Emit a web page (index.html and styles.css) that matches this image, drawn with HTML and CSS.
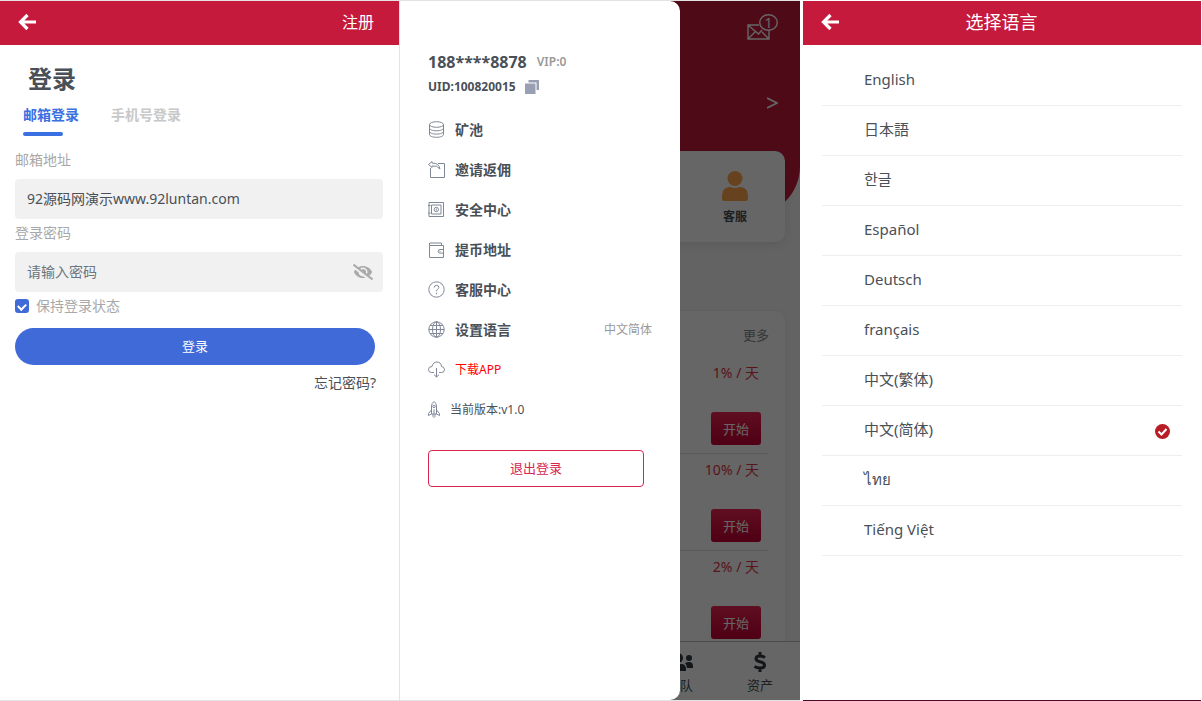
FILE: index.html
```html
<!DOCTYPE html>
<html lang="zh-CN">
  <head>
    <meta charset="utf-8" />
    <meta name="viewport" content="width=device-width, initial-scale=1" />
    <title>登录</title>
    <link rel="stylesheet" href="styles.css">
  </head>

  <body>
    <main class="screens">
      <section class="screen login">
        <header class="topbar">
          <a href="#" class="back" aria-label="返回">
            <svg width="18" height="18" viewBox="0 0 18 18">
              <path d="M9.5 2 2.5 9l7 7M3 9h15" fill="none" stroke="#fff" stroke-width="3.2" />
            </svg>
          </a>
          <a href="#" class="topbar-link">注册</a>
        </header>

        <form class="login-form">
          <h1>登录</h1>
          <div class="tabs">
            <button type="button" class="tab active">邮箱登录</button>
            <button type="button" class="tab">手机号登录</button>
          </div>

          <label class="field-label" for="email">邮箱地址</label>
          <input class="field" id="email" type="text" value="92源码网演示www.92luntan.com" />

          <label class="field-label" for="password">登录密码</label>
          <div class="password">
            <input class="field" id="password" type="password" placeholder="请输入密码" />
            <button type="button" class="eye" aria-label="显示密码">
              <svg width="20" height="16" viewBox="0 0 640 512" fill="#aaa">
                <path d="M320 400c-76 0-137-59-143-133L72 186c-14 17-26 35-37 55a32 32 0 0 0 0 29c55 107 162 178 285 178 27 0 53-4 78-10l-52-40c-8 1-17 2-26 2zm314 58L523 372a331 331 0 0 0 82-102 32 32 0 0 0 0-29C550 135 442 64 320 64c-51 0-102 13-147 37L46 3a16 16 0 0 0-23 3L3 31a16 16 0 0 0 3 23l588 455a16 16 0 0 0 23-3l20-25a16 16 0 0 0-3-23zM450 315l-39-30a95 95 0 0 0-116-123c6 9 9 19 9 30l-1 10-74-57a144 144 0 0 1 221 170z" />
              </svg>
            </button>
          </div>

          <label class="remember">
            <input type="checkbox" checked />
            保持登录状态
          </label>
          <button type="submit" class="submit">登录</button>
          <a href="#" class="forgot">忘记密码?</a>
        </form>
      </section>

      <section class="screen app">
        <div class="home">
          <div class="hero">
            <a href="#" class="mail" aria-label="消息">
              <svg width="31" height="26" viewBox="0 0 31 26" fill="none" stroke="#fff" stroke-width="1.4">
                <path d="M12 11H1v14h21V16M1 11l10.500 9L15 16M1 25l7-7M22 25l-7-7" />
                <ellipse cx="21.500" cy="8.500" rx="8.800" ry="7.800" />
              </svg>
              <span class="mail-count">1</span>
            </a>
            <a href="#" class="more-arrow" aria-label="更多">
              <svg width="11" height="12" viewBox="0 0 11 12" fill="none" stroke="#fff" stroke-width="1.6">
                <path d="M0 1l10 5L0 11" />
              </svg>
            </a>
          </div>

          <div class="card shortcuts">
            <a href="#" class="service">
              <svg width="26" height="30" viewBox="0 0 26 30" fill="#ffa84c">
                <circle cx="13" cy="7.500" r="7.500" />
                <path d="M7 16h1.500q4.500 2 9 0H19q7 1 7 9v3q0 2-2 2H2q-2 0-2-2v-3q0-8 7-9z" />
              </svg>
              客服
            </a>
          </div>

          <div class="card pools">
            <a href="#" class="pools-more">更多</a>
            <div class="pool">
              <span class="rate">1% / 天</span>
              <button type="button" class="start">开始</button>
            </div>
            <div class="pool">
              <span class="rate">10% / 天</span>
              <button type="button" class="start">开始</button>
            </div>
            <div class="pool">
              <span class="rate">2% / 天</span>
              <button type="button" class="start">开始</button>
            </div>
          </div>

          <nav class="bottom-nav">
            <a href="#" class="team">
              <svg width="26" height="20" viewBox="0 0 26 20" fill="#343a40">
                <circle cx="11" cy="6" r="5" />
                <path d="M3 19v-2q0-5 5-5h6q5 0 5 5v2z" />
                <circle cx="22" cy="6" r="3" />
                <path d="M18 11q2-1 4-1 4 0 4 4v2h-6q0-3-2-5z" />
              </svg>
              团队
            </a>
            <a href="#">
              <svg width="14" height="20" viewBox="0 0 14 20" fill="none" stroke="#343a40" stroke-width="3">
                <path d="M12 5.500Q9.500 4 7 4 3 4 3 6.800q0 2 4 3 4.500 1 4.500 3.400Q11.500 16 7 16q-3 0-5.500-1.500M7 0v4M7 16v4" />
              </svg>
              资产
            </a>
          </nav>
        </div>

        <div class="overlay"></div>

        <aside class="drawer">
          <div class="account">
            <strong class="phone">188****8878</strong>
            <span class="vip">VIP:0</span>
          </div>
          <div class="uid">
            UID:100820015
            <button type="button" class="copy" aria-label="复制">
              <svg width="14" height="14" viewBox="0 0 14 14" fill="#9aa0b4">
                <path d="M3.500 0H14v10h-2.500V2.500h-8z" />
                <path d="M0 3.500h10.500V14H0z" />
              </svg>
            </button>
          </div>

          <ul class="menu">
            <li>
              <a href="#">
                <svg class="icon" viewBox="0 0 17 17">
                  <ellipse cx="8.500" cy="3.500" rx="7" ry="2.800" />
                  <path d="M1.500 3.500v10c0 1.600 3 2.800 7 2.800s7-1.200 7-2.800v-10M1.500 7c0 1.600 3 2.800 7 2.800s7-1.200 7-2.800M1.500 10.300c0 1.600 3 2.800 7 2.800s7-1.200 7-2.800" />
                </svg>
                矿池
              </a>
            </li>
            <li>
              <a href="#">
                <svg class="icon" viewBox="0 0 17 17">
                  <path d="M10 2.500h6.500v14h-14V7M4 .500.500 3.500 4 6.500V5q5-1 8 3-1-6-8-6z" />
                </svg>
                邀请返佣
              </a>
            </li>
            <li>
              <a href="#">
                <svg class="icon" viewBox="0 0 17 17">
                  <path d="M1 1.500h14.500v14H1zM3.500 4H13v9H3.500zM0 4.500h2.500M0 12h2.500" />
                  <circle cx="8.300" cy="8.500" r="2.200" />
                  <path d="M8.300 7.500v2" />
                </svg>
                安全中心
              </a>
            </li>
            <li>
              <a href="#">
                <svg class="icon" viewBox="0 0 17 17">
                  <path d="M1.500 4.500h14v12h-14zM1.500 4.500V2h12v2.500M15.500 8.500H12a1.800 1.800 0 0 0 0 3.600h3.500M12 9.800v1" />
                </svg>
                提币地址
              </a>
            </li>
            <li>
              <a href="#">
                <svg class="icon" viewBox="0 0 17 17">
                  <circle cx="8.500" cy="8.500" r="7.700" />
                  <path d="M6.200 6.500Q6.200 4.400 8.500 4.400t2.300 2q0 1.200-1.300 1.900-1 .600-1 2M8.500 11.800v1.400" />
                </svg>
                客服中心
              </a>
            </li>
            <li>
              <a href="#">
                <svg class="icon" viewBox="0 0 17 17">
                  <circle cx="8.500" cy="8.500" r="7.700" />
                  <ellipse cx="8.500" cy="8.500" rx="4" ry="7.700" />
                  <path d="M8.500.800v15.400M.800 8.500h15.400M2 4.500h13M2 12.500h13" />
                </svg>
                设置语言
                <span class="current">中文简体</span>
              </a>
            </li>
            <li>
              <a href="#" class="download">
                <svg class="icon" viewBox="0 0 17 17">
                  <path d="M6 11.500H3.500Q.500 11.500.500 8.500T4 5.500Q5 1 9 1t4.500 4.500q3 .500 3 3.200t-3 2.800H11M8.500 7v9M6 13.700 8.500 16l2.500-2.300" />
                </svg>
                下载APP
              </a>
            </li>
            <li>
              <span class="version">
                <svg class="icon rocket" viewBox="0 0 12 17">
                  <path d="M3.500 13V5Q3.800 2 6 .500 8.200 2 8.500 5v8zM3.500 9 .500 12.500v2l3-1.500M8.500 9l3 3.500v2l-3-1.500M5 13v2.500l1 1 1-1V13M6 8.500V13" />
                  <circle cx="6" cy="5.500" r="1.200" />
                </svg>
                当前版本:v1.0
              </span>
            </li>
          </ul>
          <button type="button" class="logout">退出登录</button>
        </aside>
      </section>

      <section class="screen language">
        <header class="topbar">
          <a href="#" class="back" aria-label="返回">
            <svg width="18" height="18" viewBox="0 0 18 18">
              <path d="M9.5 2 2.5 9l7 7M3 9h15" fill="none" stroke="#fff" stroke-width="3.2" />
            </svg>
          </a>
          <h2>选择语言</h2>
        </header>

        <ul class="languages">
          <li><button type="button">English</button></li>
          <li><button type="button" lang="ja">日本語</button></li>
          <li><button type="button" lang="ko">한글</button></li>
          <li><button type="button">Español</button></li>
          <li><button type="button">Deutsch</button></li>
          <li><button type="button">français</button></li>
          <li><button type="button">中文(繁体)</button></li>
          <li>
            <button type="button">
              中文(简体)
              <svg class="check" width="15" height="15" viewBox="0 0 15 15">
                <circle cx="7.500" cy="7.500" r="7.500" fill="#b81c25" />
                <path d="M3.500 7.500 6.500 10.500 11.500 5" fill="none" stroke="#fff" stroke-width="2" />
              </svg>
            </button>
          </li>
          <li><button type="button">ไทย</button></li>
          <li><button type="button">Tiếng Việt</button></li>
        </ul>
      </section>
    </main>
  </body>
</html>
```
FILE: styles.css
```css
* {
  box-sizing: border-box;
}

body {
  margin: 0;
  color: #495057;
  font: 14px/20px "Noto Sans", "Noto Sans CJK SC", sans-serif;
}

a {
  color: inherit;
  text-decoration: none;
}

button,
input {
  font: inherit;
  color: inherit;
}

button {
  border: 0;
  padding: 0;
  background: none;
  cursor: pointer;
}

svg {
  display: block;
  flex: none;
}

ul {
  list-style: none;
  margin: 0;
  padding: 0;
}

.screens {
  display: grid;
  grid-template-columns: 400fr 400fr 402fr;
  min-height: 100vh;
}

.screen {
  border-top: 1px solid #e3e3e3;
  border-bottom: 1px solid #e3e3e3;
}

.topbar {
  display: flex;
  align-items: center;
  justify-content: space-between;
  height: 44px;
  padding: 0 25px 2px 18px;
  background: #c61a3c;
  color: #fff;
}

.topbar-link {
  font-size: 16px;
}

/* login */
.login {
  border-right: 1px solid #e3e3e3;
}

.login-form {
  display: flex;
  flex-direction: column;
  padding: 16px 16px 0 15px;
}

.login h1 {
  margin: 0 0 0 13px;
  font-size: 24px;
  line-height: 36px;
}

.tabs {
  display: flex;
  gap: 32px;
  margin: 0 0 14px 8px;
}

.tab {
  position: relative;
  height: 39px;
  padding-bottom: 4px;
  font-weight: bold;
  color: #c8c8c8;
}

.tab.active {
  color: #3a70e2;
}

.tab.active::after {
  content: "";
  position: absolute;
  bottom: 0;
  left: 0;
  width: 40px;
  height: 4px;
  border-radius: 2px;
  background: #3a70e2;
}

.field-label,
.remember {
  color: #a8a8a8;
}

.field-label {
  margin-bottom: 9px;
}

.field {
  width: 100%;
  height: 40px;
  margin-bottom: 4px;
  padding: 0 12px 2px;
  border: 0;
  border-radius: 4px;
  background: #f1f1f1;
}

.field::placeholder {
  color: #6c757d;
}

.password {
  position: relative;
}

.eye {
  position: absolute;
  top: 12px;
  right: 10px;
}

.remember {
  display: flex;
  align-items: center;
  gap: 7px;
}

.remember input {
  appearance: none;
  width: 14px;
  height: 14px;
  margin: 0;
  border-radius: 3px;
  background: #3f6ad8;
  display: grid;
  place-items: center;
}

.remember input:checked::before {
  content: "";
  width: 6px;
  height: 4px;
  border: solid #fff;
  border-width: 0 0 2px 2px;
  transform: rotate(-45deg);
}

.submit {
  height: 37px;
  margin: 12px 8px 8px 0;
  padding-bottom: 2px;
  border-radius: 20px;
  background: #3f6ad8;
  color: #fff;
  font-size: 13px;
}

.forgot {
  align-self: flex-end;
  margin-right: 7px;
}

/* home page under the open drawer */
.app {
  position: relative;
  overflow: hidden;
}

.home {
  display: flex;
  flex-direction: column;
  height: 100%;
  background: #f8f8f8;
}

.hero {
  display: flex;
  flex-direction: column;
  align-items: flex-end;
  gap: 57px;
  height: 215px;
  padding: 13px 22px;
  border-bottom-right-radius: 50px;
  background: #c61a3c;
}

.mail {
  position: relative;
}

.mail-count {
  position: absolute;
  top: 0;
  right: 0;
  width: 19px;
  line-height: 17px;
  text-align: center;
  color: #fff;
}

.card {
  margin: 0 15px;
  border-radius: 10px;
  background: #fff;
  box-shadow: 0 2px 12px rgba(0, 0, 0, 0.1);
}

.shortcuts {
  display: flex;
  justify-content: flex-end;
  height: 91px;
  margin-top: -65px;
  padding: 20px 37px;
}

.service {
  display: flex;
  flex-direction: column;
  align-items: center;
  gap: 6px;
  font-size: 12px;
  font-weight: bold;
}

.pools {
  flex: 1;
  margin-top: 69px;
  padding: 14px 16px 0;
  border-radius: 10px 10px 0 0;
  box-shadow: 0 0 10px rgba(0, 0, 0, 0.06);
}

.pools-more {
  display: block;
  margin-bottom: 12px;
  font-size: 13px;
  text-align: right;
  color: #888;
}

.pool {
  display: flex;
  flex-direction: column;
  align-items: flex-end;
  justify-content: space-between;
  height: 97px;
  padding: 6px 8px 8px 0;
  border-bottom: 1px solid #e4e4e4;
}

.pool:last-child {
  height: 90px;
  padding-bottom: 2px;
  border-bottom: 0;
}

.rate {
  margin-right: 2px;
  color: #dc3545;
}

.start {
  width: 50px;
  height: 33px;
  border-radius: 3px;
  background: linear-gradient(#f02455, #c60033);
  color: #fff;
  font-size: 13px;
}

.bottom-nav {
  display: flex;
  flex: none;
  justify-content: flex-end;
  height: 59px;
  border-top: 1px solid #bbb;
  background: #fff;
}

.bottom-nav a {
  display: flex;
  flex-direction: column;
  align-items: center;
  gap: 3px;
  width: 20%;
  padding-top: 10px;
  font-size: 13px;
}

.overlay {
  position: absolute;
  inset: 0;
  background: rgba(0, 0, 0, 0.6);
}

.drawer {
  position: absolute;
  top: 0;
  bottom: 0;
  left: 0;
  width: 70%;
  padding: 49px 28px 0;
  border-radius: 0 10px 10px 0;
  background: #fff;
}

.account {
  display: flex;
  align-items: center;
  gap: 10px;
  line-height: 24px;
}

.phone {
  font-size: 16px;
}

.vip {
  font-size: 12px;
  font-weight: 600;
  color: #999;
}

.uid {
  display: flex;
  align-items: center;
  gap: 9px;
  height: 25px;
  margin-bottom: 11px;
  font-size: 12px;
  font-weight: bold;
}

.menu a,
.version {
  display: flex;
  align-items: center;
  gap: 10px;
  height: 40px;
  font-weight: bold;
}

.menu .icon {
  width: 17px;
  height: 17px;
  margin-bottom: 2px;
  fill: none;
  stroke: #7f8796;
  stroke-width: 1;
}

.menu .rocket {
  width: 12px;
}

.menu .current {
  margin-left: auto;
  font-size: 12px;
  font-weight: normal;
  color: #999;
}

.menu .download,
.version {
  font-size: 12px;
  font-weight: normal;
}

.menu .download {
  color: #f00;
}

.logout {
  width: calc(100% - 8px);
  height: 37px;
  margin-top: 20px;
  padding-bottom: 2px;
  border: 1px solid #d92550;
  border-radius: 4px;
  color: #d92550;
  font-size: 13px;
}

/* language picker */
.language {
  margin: 0 1px 0 3px;
  border-top-color: #fff;
  border-bottom-color: #4b0a22;
}

.language h2 {
  flex: 1;
  margin: 0 12px 0 0;
  font-size: 18px;
  font-weight: normal;
  text-align: center;
}

.languages {
  padding: 11px 19px;
}

.languages li {
  border-bottom: 1px solid #eee;
}

.languages button {
  display: flex;
  align-items: center;
  justify-content: space-between;
  width: 100%;
  height: 49px;
  padding: 0 12px 4px 42px;
  font-size: 15px;
}

.check {
  margin-top: 6px;
}

[lang="ja"] {
  font-family: "Noto Sans", "Noto Sans CJK JP", sans-serif;
}

[lang="ko"] {
  font-family: "Noto Sans", "Noto Sans CJK KR", sans-serif;
}
```
